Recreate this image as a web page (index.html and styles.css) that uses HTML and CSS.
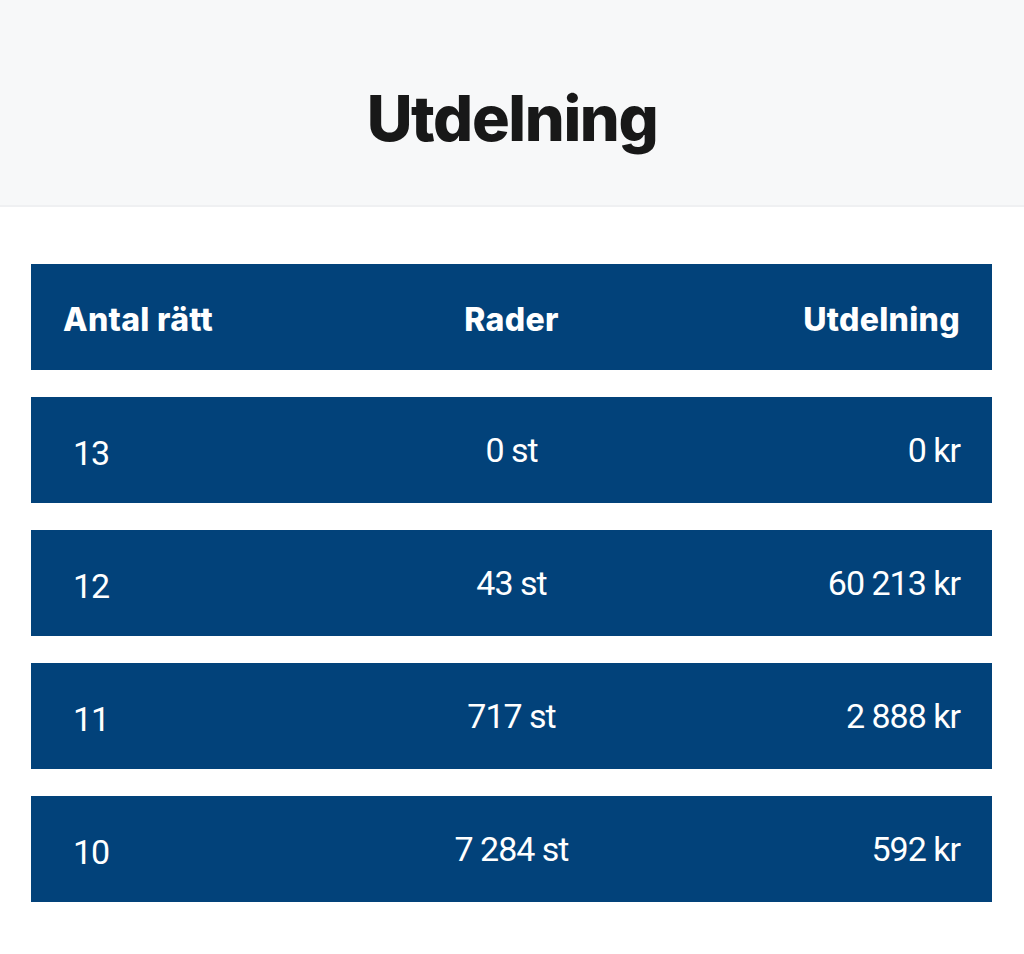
FILE: index.html
```html
<!DOCTYPE html>
<html lang="sv">
<head>
<meta charset="utf-8">
<title>Utdelning</title>
<link rel="stylesheet" href="styles.css">
</head>
<body>
<header class="hero">
  <h1 class="title">Utdelning</h1>
</header>
<main class="content">
  <div class="table">
    <div class="row head">
      <div class="cell c1">Antal rätt</div>
      <div class="cell c2">Rader</div>
      <div class="cell c3">Utdelning</div>
    </div>
    <div class="row">
      <div class="cell c1"><span class="num">13</span></div>
      <div class="cell c2">0 st</div>
      <div class="cell c3">0 kr</div>
    </div>
    <div class="row">
      <div class="cell c1"><span class="num">12</span></div>
      <div class="cell c2">43 st</div>
      <div class="cell c3">60 213 kr</div>
    </div>
    <div class="row">
      <div class="cell c1"><span class="num">11</span></div>
      <div class="cell c2">717 st</div>
      <div class="cell c3">2 888 kr</div>
    </div>
    <div class="row">
      <div class="cell c1"><span class="num">10</span></div>
      <div class="cell c2">7 284 st</div>
      <div class="cell c3">592 kr</div>
    </div>
  </div>
</main>
</body>
</html>
```

FILE: styles.css
```css
* { box-sizing: border-box; }
html, body { margin: 0; padding: 0; background: #ffffff; }
body { font-family: "Inter", "Noto Sans", sans-serif; color: #1a1a1a; }

.hero {
  height: 207px;
  background: #f7f8f9;
  border-bottom: 2px solid #eff0f2;
  display: flex;
  align-items: center;
  justify-content: center;
}
.title {
  margin: 0;
  font-size: 63px;
  font-weight: 800;
  letter-spacing: -1.4px;
  color: #181818;
  padding-top: 30px;
}

.content { padding: 57px 32px 40px 31px; }
.table { display: flex; flex-direction: column; gap: 27px; }
.row {
  height: 106px;
  background: #02427a;
  color: #ffffff;
  display: grid;
  grid-template-columns: 1fr 1fr 1fr;
  align-items: center;
  padding: 0 32px;
}
.cell {
  font-family: "Roboto", "Liberation Sans", sans-serif;
  font-size: 34px;
  font-weight: 400;
  letter-spacing: -1px;
}
.head .cell {
  font-family: "Inter", "Noto Sans", sans-serif;
  font-weight: 800;
  font-size: 32px;
  letter-spacing: 0.3px;
  padding-top: 4px;
}
.c1 { text-align: left; }
.c2 { text-align: center; }
.c3 { text-align: right; }
.num { display: inline-block; width: 56px; text-align: center; padding-top: 6px; }
```
